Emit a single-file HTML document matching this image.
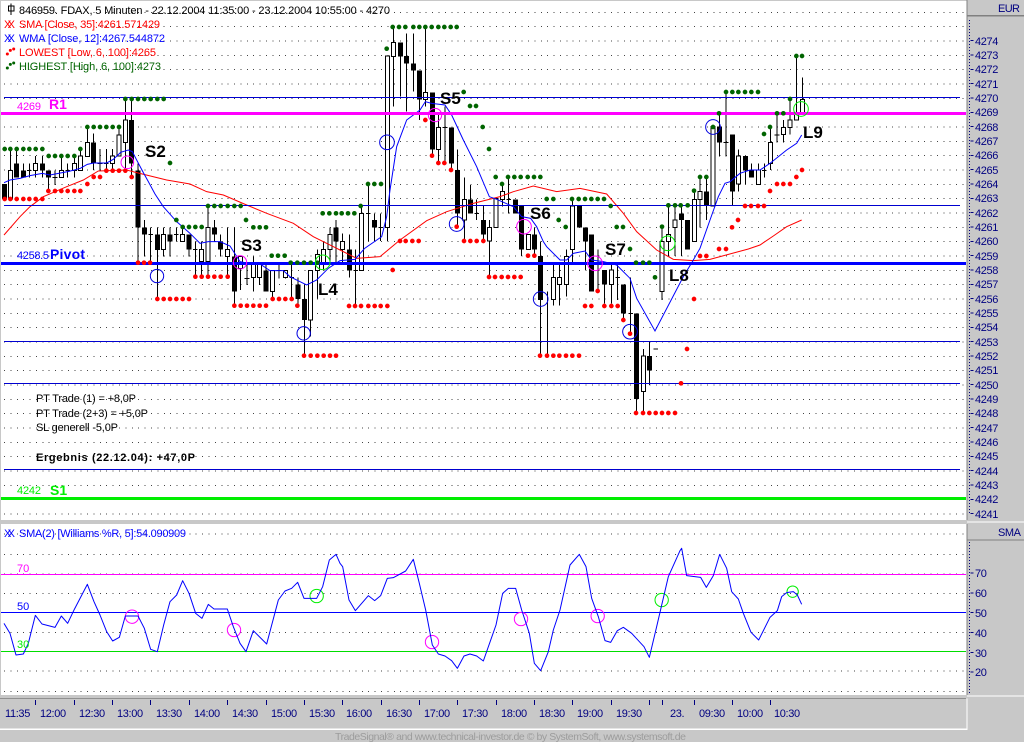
<!DOCTYPE html>
<html><head><meta charset="utf-8"><style>
html,body{margin:0;padding:0;width:1024px;height:742px;overflow:hidden;background:#c8c8c8}
svg{position:absolute;left:0;top:0;display:block}
text{font-family:"Liberation Sans",Arial,sans-serif;font-size:11px}
.ax text{fill:#000080}
.b{font-weight:bold;font-size:17px;fill:#000}
</style></head><body>
<svg width="1024" height="742" viewBox="0 0 3072 2226">
<rect x="3" y="3" width="2898" height="1557" fill="#fff"/>
<rect x="3" y="1572" width="2898" height="513" fill="#fff"/>
<path d="M0 2095H2898" stroke="#909090" stroke-width="3" shape-rendering="crispEdges"/>
<path d="M0 2188H2901V2095M2901 1566H3072M2901 2088H3072" stroke="#fff" stroke-width="4" fill="none" shape-rendering="crispEdges"/>
<path d="M2901 0V1560M2901 1572V2085M2901 47H3072M2901 1620H3072" stroke="#808080" stroke-width="4" fill="none" shape-rendering="crispEdges"/>
<!-- grid -->
<path shape-rendering="crispEdges" stroke="#444" stroke-width="3" stroke-dasharray="3 16.17" fill="none" d="M69.5 37H2895M69.5 80H2895M69.5 123H2895M69.5 166H2895M69.5 209H2895M12 252H2895M12 295H2895M12 338H2895M12 381H2895M12 424H2895M12 467H2895M12 510H2895M12 553H2895M12 596H2895M12 639H2895M12 682H2895M12 725H2895M12 768H2895M12 811H2895M12 854H2895M12 897H2895M12 940H2895M12 983H2895M12 1026H2895M12 1069H2895M12 1112H2895M12 1155H2895M12 1198H2895M12 1241H2895M12 1284H2895M12 1327H2895M12 1370H2895M12 1413H2895M12 1456H2895M12 1499H2895M12 1542H2895M12 1602H2895M12 1663H2895M12 1722H2895M12 1780H2895M12 1838H2895M12 1897H2895M12 1955H2895M12 2013H2895M12 2075H2895"/>
<!-- wicks -->
<path shape-rendering="crispEdges" stroke="#000" stroke-width="3" fill="none" d="M31 447V597M50 447V533M70 490V533M88 490V533M81 512H95M107 468V533M127 468V533M146 512V575M165 512V555M158 533H172M184 468V533M203 490V533M196 512H210M223 468V533M241 447V512M262 381V469M281 400V510M300 447V512M293 490H307M319 447V512M312 490H326M338 447V512M357 381V468M376 297V510M395 297V533M414 490V785M433 660V770M452 682V785M445 703H459M472 682V897M491 682V770M510 682V770M529 682V725M522 703H536M548 682V725M567 703V770M586 725V830M579 748H593M605 725V830M624 618V830M643 660V725M662 703V770M683 682V830M703 682V917M722 770V870M741 790V855M734 835H748M760 770V875M779 790V855M798 790V875M818 812V895M837 790V835M830 812H844M856 812V835M875 790V895M868 832H882M894 832V917M913 853V1065M932 812V1010M952 748V895M971 725V812M990 682V790M1008 660V790M1027 700V790M1048 703V832M1067 748V917M1060 812H1074M1085 618V812M1105 554V723M1098 640H1112M1124 640V723M1142 640V723M1135 682H1149M1162 168V723M1180 80V320M1201 127V290M1219 100V335M1240 100V275M1258 212V360M1276 80V320M1297 277V465M1315 340V490M1335 320V490M1328 382H1342M1354 382V510M1372 448V680M1393 532V723M1411 555V640M1430 598V660M1423 640H1437M1450 618V723M1468 660V832M1488 595V682M1507 554V620M1526 532V640M1519 598H1533M1546 598V640M1564 618V768M1585 703V748M1603 682V768M1622 725V1067M1642 875V1067M1660 790V917M1678 790V917M1699 748V890M1717 595V790M1738 618V682M1757 682V810M1775 703V875M1794 748V875M1813 810V910M1834 790V910M1853 790V900M1846 832H1860M1871 853V955M1892 832V1000M1885 940H1899M1909 940V1237M1930 1047V1237M1949 1025V1155M1960 1047H1974M1986 680V900M2005 618V768M2025 618V768M2045 618V768M2063 660V748M2083 575V725M2100 530V683M2119 530V660M2139 380V618M2158 340V470M2178 276V470M2171 428H2185M2197 403V618M2215 448V575M2236 468V552M2254 490V533M2275 490V553M2293 490V533M2286 512H2300M2311 380V510M2331 340V428M2324 405H2338M2350 360V428M2370 297V403M2389 168V360M2408 232V340"/>
<!-- black bodies -->
<path shape-rendering="crispEdges" stroke="#000" stroke-width="15" fill="none" d="M14 552V597M50 490V533M70 512V533M127 490V512M146 512V533M281 427V490M395 360V490M414 512V683M433 682V703M472 703V750M510 703V725M567 703V748M643 682V703M662 725V748M703 770V875M798 812V875M894 853V897M913 897V960M1008 682V725M1048 748V812M1124 660V682M1201 127V170M1219 168V190M1240 190V212M1258 212V298M1297 277V448M1354 382V490M1372 510V640M1411 598V640M1450 660V703M1546 598V640M1564 618V748M1603 703V748M1622 768V900M1738 618V682M1757 682V724M1775 703V875M1813 810V854M1871 853V940M1909 940V1197M1949 1068V1112M2045 640V660M2063 660V748M2119 575V618M2158 380V428M2197 403V575M2236 468V512M2254 512V533"/>
<!-- white bodies -->
<path shape-rendering="crispEdges" stroke="#000" stroke-width="3" fill="#fff" d="M25 512H37V597H25ZM101 490H113V512H101ZM178 512H190V533H178ZM217 490H229V512H217ZM235 468H247V512H235ZM256 427H268V469H256ZM332 468H344V490H332ZM351 405H363V468H351ZM370 360H382V427H370ZM485 703H497V748H485ZM542 703H554V725H542ZM599 748H611V785H599ZM618 682H630V785H618ZM677 748H689V770H677ZM716 770H728V805H716ZM754 790H766V832H754ZM773 790H785V832H773ZM812 812H824V875H812ZM850 812H862V832H850ZM926 812H938V960H926ZM946 763H958V812H946ZM965 748H977V790H965ZM984 703H996V748H984ZM1021 725H1033V748H1021ZM1079 640H1091V812H1079ZM1156 168H1168V682H1156ZM1174 127H1186V170H1174ZM1270 278H1282V298H1270ZM1309 382H1321V448H1309ZM1387 598H1399V660H1387ZM1462 682H1474V723H1462ZM1482 595H1494V682H1482ZM1501 575H1513V598H1501ZM1579 703H1591V748H1579ZM1654 832H1666V898H1654ZM1672 832H1684V853H1672ZM1693 769H1705V853H1693ZM1711 618H1723V748H1711ZM1828 810H1840V854H1828ZM1924 1068H1936V1175H1924ZM1980 725H1992V875H1980ZM1999 704H2011V725H1999ZM2019 660H2031V682H2019ZM2077 598H2089V725H2077ZM2094 575H2106V598H2094ZM2133 380H2145V618H2133ZM2209 468H2221V552H2209ZM2269 510H2281V553H2269ZM2305 427H2317V490H2305ZM2344 382H2356V403H2344ZM2364 360H2376V382H2364ZM2383 340H2395V360H2383ZM2402 298H2414V340H2402Z"/>
<!-- moving averages -->
<polyline fill="none" stroke="#f00" stroke-width="3" points="12,705 60,650 90,620 130,590 200,560 250,540 295,513 380,510 410,518 500,540 570,552 620,575 670,585 740,615 800,640 880,670 940,710 1010,745 1020,750 1070,775 1140,770 1200,720 1280,662 1340,635 1420,610 1500,590 1540,575 1600,558 1670,575 1740,565 1820,582 1870,640 1910,695 1970,750 2020,778 2080,782 2130,778 2245,747 2280,735 2320,708 2360,680 2405,660"/>
<polyline fill="none" stroke="#00f" stroke-width="3" points="12,548 30,540 60,535 90,527 127,520 150,525 203,515 223,510 241,505 262,493 281,489 320,489 340,478 362,457 385,450 397,455 410,480 430,518 445,545 465,582 490,620 530,665 570,700 600,730 625,725 660,725 690,738 720,785 745,790 780,792 810,812 850,812 870,830 920,855 950,840 985,805 1020,782 1065,778 1094,745 1145,710 1160,650 1170,570 1190,440 1220,360 1260,330 1276,305 1295,310 1335,315 1355,345 1390,420 1430,500 1468,590 1490,598 1540,620 1565,650 1592,655 1610,680 1630,725 1640,740 1680,780 1700,780 1720,760 1755,753 1775,780 1810,785 1850,795 1890,835 1910,895 1965,993 2050,830 2080,780 2100,745 2130,660 2155,590 2175,550 2190,545 2220,520 2250,510 2280,510 2310,490 2360,450 2390,430 2405,405"/>
<!-- horizontal lines -->
<path shape-rendering="crispEdges" stroke="#0000d0" stroke-width="3" fill="none" d="M12 292.5H2880M12 616.5H2880M12 1024.5H2880M12 1150.5H2880M12 1408.5H2880"/>
<path shape-rendering="crispEdges" stroke="#f0f" stroke-width="9" fill="none" d="M3 340.5H2898"/>
<path shape-rendering="crispEdges" stroke="#00f" stroke-width="9" fill="none" d="M3 790.5H2898"/>
<path shape-rendering="crispEdges" stroke="#0e0" stroke-width="9" fill="none" d="M3 1495.5H2898"/>
<path shape-rendering="crispEdges" stroke="#f0f" stroke-width="3" fill="none" d="M3 1723.5H2898"/>
<path shape-rendering="crispEdges" stroke="#00f" stroke-width="3" fill="none" d="M3 1837.5H2898"/>
<path shape-rendering="crispEdges" stroke="#0d0" stroke-width="3" fill="none" d="M3 1954.5H2898"/>
<!-- red dots -->
<path stroke="#f00" stroke-width="14" stroke-linecap="round" fill="none" d="M14 597h.1M31 597h.1M50 597h.1M70 597h.1M88 597h.1M107 597h.1M127 597h.1M145 573h.1M165 573h.1M184 573h.1M203 573h.1M223 573h.1M241 573h.1M262 552h.1M281 531h.1M300 531h.1M319 512h.1M338 512h.1M357 512h.1M376 512h.1M395 531h.1M414 788h.1M432 788h.1M450 788h.1M586 830h.1M605 830h.1M624 830h.1M643 830h.1M662 830h.1M683 830h.1M472 897h.1M491 897h.1M510 897h.1M529 897h.1M548 897h.1M567 897h.1M703 917h.1M722 917h.1M741 917h.1M760 917h.1M779 917h.1M798 917h.1M818 897h.1M837 897h.1M856 897h.1M875 897h.1M892 917h.1M912 1067h.1M932 1067h.1M952 1067h.1M971 1067h.1M990 1067h.1M1008 1067h.1M1047 918h.1M1065 918h.1M1083 918h.1M1105 918h.1M1124 918h.1M1142 918h.1M1162 918h.1M1178 810h.1M1200 723h.1M1217 723h.1M1237 723h.1M1256 723h.1M1276 360h.1M1296 467h.1M1315 489h.1M1333 489h.1M1353 510h.1M1370 680h.1M1392 723h.1M1411 723h.1M1430 723h.1M1450 723h.1M1467 831h.1M1485 831h.1M1505 831h.1M1524 831h.1M1543 831h.1M1562 831h.1M1584 767h.1M1603 767h.1M1620 1067h.1M1641 1067h.1M1660 1067h.1M1678 1067h.1M1698 1067h.1M1717 1067h.1M1737 1067h.1M1755 918h.1M1774 918h.1M1813 918h.1M1834 918h.1M1853 918h.1M1793 873h.1M1870 960h.1M1890 1001h.1M1908 1239h.1M1929 1239h.1M1948 1239h.1M1967 1239h.1M1986 1239h.1M2005 1239h.1M2025 1239h.1M2043 1150h.1M2061 1047h.1M2082 897h.1M2100 768h.1M2119 768h.1M2157 747h.1M2178 747h.1M2196 682h.1M2214 660h.1M2235 618h.1M2253 618h.1M2274 618h.1M2292 618h.1M2310 573h.1M2331 552h.1M2350 552h.1M2370 552h.1M2389 531h.1M2406 510h.1"/>
<!-- green dots -->
<path stroke="#006400" stroke-width="14" stroke-linecap="round" fill="none" d="M14 447h.1M31 447h.1M50 447h.1M70 447h.1M88 447h.1M107 447h.1M127 447h.1M146 468h.1M165 468h.1M184 468h.1M203 468h.1M223 468h.1M241 447h.1M262 381h.1M281 381h.1M300 381h.1M319 381h.1M338 381h.1M357 381h.1M376 297h.1M395 297h.1M414 297h.1M433 297h.1M452 297h.1M472 297h.1M491 297h.1M510 489h.1M624 618h.1M643 618h.1M662 618h.1M683 618h.1M703 618h.1M722 618h.1M529 660h.1M738 660h.1M548 681h.1M567 681h.1M586 681h.1M605 681h.1M760 682h.1M779 682h.1M798 682h.1M968 640h.1M988 640h.1M1008 640h.1M815 767h.1M834 767h.1M854 767h.1M872 788h.1M892 788h.1M912 788h.1M932 788h.1M952 788h.1M1178 81h.1M1197 81h.1M1216 81h.1M1240 81h.1M1258 81h.1M1276 81h.1M1295 81h.1M1315 81h.1M1333 81h.1M1352 81h.1M1370 81h.1M1160 146h.1M1391 276h.1M1410 318h.1M1428 318h.1M1448 381h.1M1467 447h.1M1487 531h.1M1524 531h.1M1543 531h.1M1562 531h.1M1583 531h.1M1602 531h.1M1621 531h.1M1104 552h.1M1123 552h.1M1143 552h.1M1506 552h.1M1082 618h.1M1025 640h.1M1044 640h.1M1063 640h.1M1640 597h.1M1660 597h.1M1716 597h.1M1736 597h.1M1755 597h.1M1774 597h.1M1793 597h.1M1812 597h.1M1832 618h.1M1676 660h.1M1697 681h.1M1850 681h.1M1869 681h.1M1890 747h.1M1908 788h.1M1929 788h.1M1948 788h.1M1965 832h.1M1986 680h.1M2005 616h.1M2025 616h.1M2042 616h.1M2063 616h.1M2082 572h.1M2100 531h.1M2119 531h.1M2139 381h.1M2157 340h.1M2178 276h.1M2197 276h.1M2215 276h.1M2235 276h.1M2254 276h.1M2274 276h.1M2292 402h.1M2310 381h.1M2331 340h.1M2350 340h.1M2370 297h.1M2389 168h.1M2406 168h.1"/>
<!-- circles -->
<g fill="none" stroke-width="3">
<g stroke="#0000e0"><circle cx="471" cy="828" r="20"/><circle cx="911" cy="1000" r="20"/><circle cx="1161" cy="427" r="22"/><circle cx="1370" cy="672" r="22"/><circle cx="1622" cy="897" r="22"/><circle cx="1890" cy="995" r="22"/><circle cx="2139" cy="381" r="22"/></g>
<g stroke="#f0f"><circle cx="382" cy="487" r="19"/><circle cx="720" cy="787" r="20"/><circle cx="1305" cy="345" r="20"/><circle cx="1572" cy="680" r="22"/><circle cx="1785" cy="790" r="22"/><circle cx="396" cy="1850" r="20"/><circle cx="702" cy="1890" r="20"/><circle cx="1296" cy="1926" r="20"/><circle cx="1563" cy="1857" r="20"/><circle cx="1793" cy="1848" r="20"/></g>
<g stroke="#0e0"><circle cx="968" cy="787" r="22"/><circle cx="2003" cy="730" r="22"/><circle cx="2403" cy="327" r="22"/><circle cx="950" cy="1788" r="20"/><circle cx="1985" cy="1800" r="20"/><circle cx="2378" cy="1775" r="17"/></g>
</g>
<!-- williams line -->
<polyline fill="none" stroke="#00f" stroke-width="3" stroke-linejoin="round" points="12,1870 30,1900 48,1965 70,1962 85,1930 106,1846 126,1872 165,1882 184,1848 203,1870 223,1828 262,1753 282,1805 300,1845 320,1895 338,1923 358,1912 376,1848 414,1848 433,1885 452,1948 472,1955 491,1875 510,1805 530,1785 548,1742 567,1780 587,1840 606,1855 625,1813 642,1827 682,1827 700,1880 720,1930 738,1955 760,1892 800,1932 835,1800 855,1773 875,1765 893,1747 912,1795 950,1795 968,1760 988,1680 1008,1663 1020,1690 1028,1700 1047,1800 1066,1832 1105,1787 1124,1802 1142,1787 1162,1735 1180,1733 1217,1713 1240,1678 1258,1750 1277,1830 1297,1935 1315,1962 1335,1968 1355,1982 1372,2005 1392,1968 1410,1962 1430,1968 1450,1983 1488,1875 1508,1780 1525,1765 1547,1765 1565,1830 1588,1900 1603,1990 1622,2012 1645,1955 1660,1890 1680,1830 1710,1695 1738,1663 1758,1700 1775,1795 1795,1850 1815,1922 1832,1927 1852,1892 1870,1882 1895,1900 1932,1940 1948,1972 1970,1880 2005,1730 2040,1652 2045,1645 2060,1727 2102,1732 2119,1762 2140,1727 2159,1663 2180,1705 2195,1775 2215,1797 2230,1840 2253,1897 2276,1920 2310,1852 2332,1832 2345,1790 2360,1778 2380,1775 2392,1785 2405,1813"/>
<!-- axis ticks -->
<path shape-rendering="crispEdges" stroke="#000080" stroke-width="3" fill="none" d="M106 2100V2115M223 2100V2115M337 2100V2115M451 2100V2115M568 2100V2115M682 2100V2115M800 2100V2115M913 2100V2115M1027 2100V2115M1144 2100V2115M1258 2100V2115M1372 2100V2115M1489 2100V2115M1603 2100V2115M1717 2100V2115M1834 2100V2115M1948 2100V2115M1987 2100V2115M2083 2100V2115M2197 2100V2115M2311 2100V2115"/>
<path shape-rendering="crispEdges" stroke="#000080" stroke-width="3" stroke-dasharray="3 6" fill="none" d="M2908 60V1545M2908 1626V2085"/>
<path shape-rendering="crispEdges" stroke="#000080" stroke-width="3" fill="none" d="M2912 122h9M2912 165h9M2912 208h9M2912 251h9M2912 294h9M2912 337h9M2912 380h9M2912 423h9M2912 466h9M2912 509h9M2912 552h9M2912 595h9M2912 638h9M2912 681h9M2912 724h9M2912 767h9M2912 810h9M2912 853h9M2912 896h9M2912 939h9M2912 982h9M2912 1025h9M2912 1068h9M2912 1111h9M2912 1154h9M2912 1197h9M2912 1240h9M2912 1283h9M2912 1326h9M2912 1369h9M2912 1412h9M2912 1455h9M2912 1498h9M2912 1541h9M2912 1719h9M2912 1779h9M2912 1838h9M2912 1897h9M2912 1957h9M2912 2016h9"/>
<!-- legend icons -->
<path stroke="#000" stroke-width="3" fill="none" shape-rendering="crispEdges" d="M25 18H42V33H25ZM33 10V45"/>
<path stroke="#f00" stroke-width="9" stroke-linecap="round" fill="none" d="M22 162h.1M31 151h.1M41 147h.1"/>
<path stroke="#006400" stroke-width="9" stroke-linecap="round" fill="none" d="M22 204h.1M31 193h.1M41 189h.1"/>
</svg>
<svg width="1024" height="742" viewBox="0 0 1024 742">
<text x="19" y="14" textLength="371" lengthAdjust="spacing">846959. FDAX, 5 Minuten - 22.12.2004 11:35:00 - 23.12.2004 10:55:00 - 4270</text>
<text x="4" y="28" fill="#f00" textLength="11" lengthAdjust="spacing">XX</text>
<text x="19" y="28" fill="#f00" textLength="141" lengthAdjust="spacing">SMA [Close, 35]:4261.571429</text>
<text x="4" y="42" fill="#00f" textLength="11" lengthAdjust="spacing">XX</text>
<text x="19" y="42" fill="#00f" textLength="146" lengthAdjust="spacing">WMA [Close, 12]:4267.544872</text>
<text x="19" y="56" fill="#f00" textLength="137" lengthAdjust="spacing">LOWEST [Low, 6, 100]:4265</text>
<text x="19" y="70" fill="#006400" textLength="142" lengthAdjust="spacing">HIGHEST [High, 6, 100]:4273</text>
<text x="17" y="110" fill="#f0f" textLength="24" lengthAdjust="spacing">4269</text>
<text x="49" y="109" fill="#f0f" font-weight="bold" style="font-size:14px">R1</text>
<text x="17" y="259" fill="#00f" textLength="32" lengthAdjust="spacing">4258.5</text>
<text x="50" y="259" fill="#00f" font-weight="bold" style="font-size:14px" textLength="35" lengthAdjust="spacing">Pivot</text>
<text x="17" y="494" fill="#0e0" textLength="24" lengthAdjust="spacing">4242</text>
<text x="50" y="495" fill="#0e0" font-weight="bold" style="font-size:14px">S1</text>
<text x="36" y="402" textLength="100" lengthAdjust="spacing">PT Trade (1) = +8,0P</text>
<text x="36" y="417" textLength="112" lengthAdjust="spacing">PT Trade (2+3) = +5,0P</text>
<text x="36" y="431" textLength="82" lengthAdjust="spacing">SL generell -5,0P</text>
<text x="36" y="461" font-weight="bold" textLength="159" lengthAdjust="spacing">Ergebnis (22.12.04): +47,0P</text>
<text class="b" x="145" y="157">S2</text>
<text class="b" x="440" y="104">S5</text>
<text class="b" x="241" y="251">S3</text>
<text class="b" x="318" y="295">L4</text>
<text class="b" x="530" y="219">S6</text>
<text class="b" x="605" y="255">S7</text>
<text class="b" x="669" y="281">L8</text>
<text class="b" x="803" y="138">L9</text>
<text x="4" y="537" fill="#00f" textLength="11" lengthAdjust="spacing">XX</text>
<text x="19" y="537" fill="#00f" textLength="167" lengthAdjust="spacing">SMA(2) [Williams %R, 5]:54.090909</text>
<text x="17" y="572" fill="#f0f">70</text>
<text x="17" y="610" fill="#00f">50</text>
<text x="17" y="648" fill="#0e0">30</text>
<g class="ax" letter-spacing="-.35">
<text x="998" y="12" style="letter-spacing:0" textLength="22" lengthAdjust="spacing">EUR</text>
<text x="998" y="536" style="letter-spacing:0" textLength="23" lengthAdjust="spacing">SMA</text>
<text x="975" y="45">4274</text><text x="975" y="59">4273</text><text x="975" y="73">4272</text><text x="975" y="88">4271</text><text x="975" y="102">4270</text><text x="975" y="116">4269</text><text x="975" y="131">4268</text><text x="975" y="145">4267</text><text x="975" y="159">4266</text><text x="975" y="174">4265</text><text x="975" y="188">4264</text><text x="975" y="202">4263</text><text x="975" y="217">4262</text><text x="975" y="231">4261</text><text x="975" y="245">4260</text><text x="975" y="260">4259</text><text x="975" y="274">4258</text><text x="975" y="288">4257</text><text x="975" y="303">4256</text><text x="975" y="317">4255</text><text x="975" y="331">4254</text><text x="975" y="346">4253</text><text x="975" y="360">4252</text><text x="975" y="374">4251</text><text x="975" y="389">4250</text><text x="975" y="403">4249</text><text x="975" y="417">4248</text><text x="975" y="432">4247</text><text x="975" y="446">4246</text><text x="975" y="460">4245</text><text x="975" y="475">4244</text><text x="975" y="489">4243</text><text x="975" y="503">4242</text><text x="975" y="518">4241</text>
<text x="975" y="577">70</text><text x="975" y="597">60</text><text x="975" y="617">50</text><text x="975" y="637">40</text><text x="975" y="657">30</text><text x="975" y="676">20</text>
<text x="5" y="717">11:35</text><text x="40" y="717">12:00</text><text x="79" y="717">12:30</text><text x="117" y="717">13:00</text><text x="156" y="717">13:30</text><text x="194" y="717">14:00</text><text x="232" y="717">14:30</text><text x="271" y="717">15:00</text><text x="309" y="717">15:30</text><text x="346" y="717">16:00</text><text x="386" y="717">16:30</text><text x="424" y="717">17:00</text><text x="462" y="717">17:30</text><text x="501" y="717">18:00</text><text x="539" y="717">18:30</text><text x="577" y="717">19:00</text><text x="616" y="717">19:30</text><text x="670" y="717">23.</text><text x="699" y="717">09:30</text><text x="737" y="717">10:00</text><text x="774" y="717">10:30</text>
</g>
<text x="335" y="740" fill="#9c9c9c" style="font-size:10.5px" textLength="351" lengthAdjust="spacing">TradeSignal® and www.technical-investor.de © by SystemSoft, www.systemsoft.de</text>
</svg>
</body></html>
